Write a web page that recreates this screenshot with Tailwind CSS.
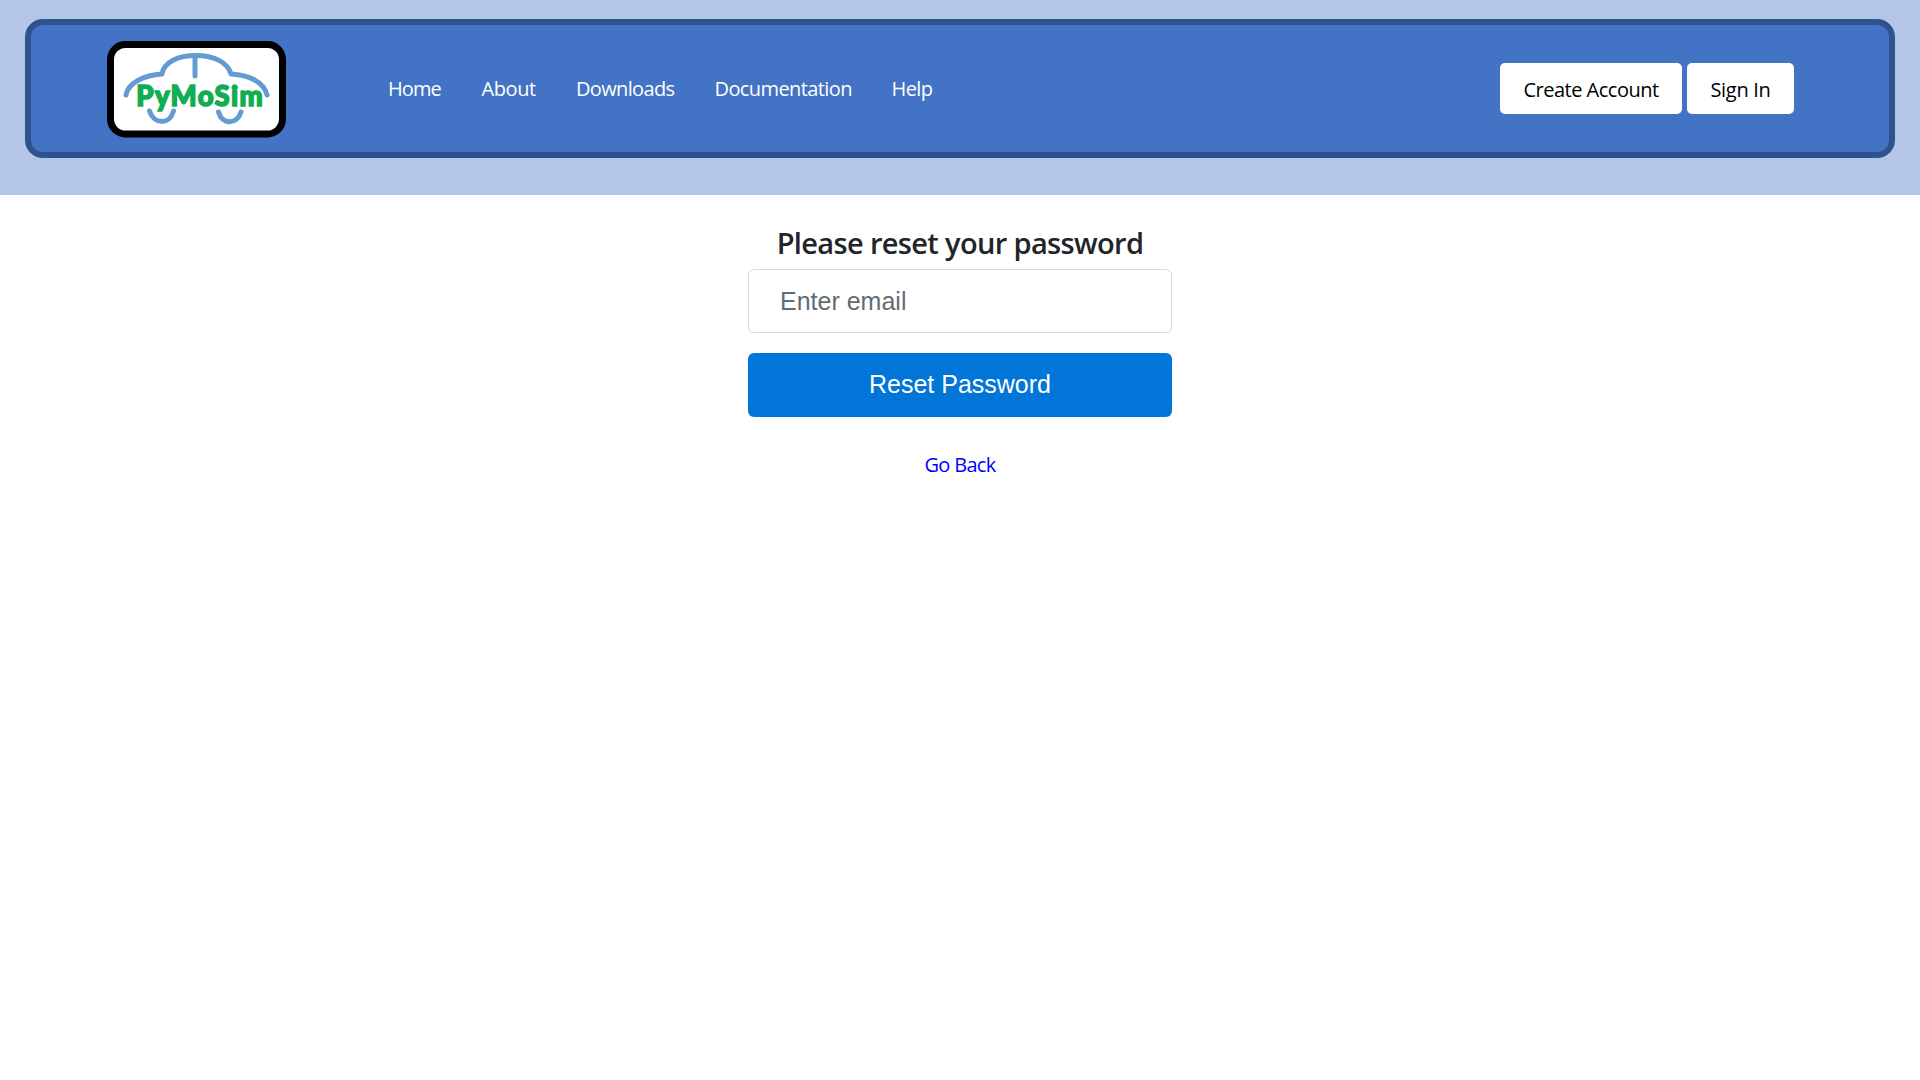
<!DOCTYPE html>
<html lang="en">
<head>
<meta charset="utf-8">
<title>PyMoSim</title>
<script src="https://cdn.jsdelivr.net/npm/@tailwindcss/browser@4"></script>
</head>
<body class="min-h-screen bg-white font-['Open_Sans',sans-serif] text-[20px] leading-[30px]">
<header class="h-[195px] bg-[#b4c6e7] px-[25px] pt-[19px]">
  <div class="flex h-[139px] items-center rounded-[18px] border-6 border-[#2f528f] bg-[#4273c5] pl-[74px] pr-[95px]">
    <svg class="h-[100px] w-[184px] shrink-0" viewBox="105 39 184 100" role="img" aria-label="PyMoSim">
      <rect x="110.500" y="44.500" width="172" height="89.500" rx="15" fill="#fff" stroke="#000" stroke-width="7"/>
      <g fill="none" stroke="#659bd3" stroke-width="5" stroke-linecap="round" stroke-linejoin="round">
        <path d="M126 95C128 83 144 75 162 74C164 62 178 55.500 196 55.500C215 55.500 228 63 231 74C249 75 264 82 267 95"/>
        <path d="M195 57V76"/>
        <path d="M149.500 111C154 125 170 125 173.500 111"/>
        <path d="M218.500 112C222 125 237 125 241 112"/>
      </g>
      <text transform="scale(.95 1)" x="143.500" y="106.500" textLength="133" lengthAdjust="spacing" class="font-['Lato'] text-[29px] font-black" fill="#10ae52" stroke="#10ae52" stroke-width="1.600">PyMoSim</text>
    </svg>
    <nav class="ml-[99px] flex gap-[40px] whitespace-nowrap text-white">
      <a class="w-[53px] tracking-[-0.9px]">Home</a>
      <a class="w-[55px] pl-[0.5px] tracking-[-0.4px]">About</a>
      <a class="w-[99px] tracking-[-0.65px]">Downloads</a>
      <a class="w-[137px] -indent-[0.5px] tracking-[-0.6px]">Documentation</a>
      <a class="w-[41px] -indent-[0.5px] tracking-[-0.6px]">Help</a>
    </nav>
    <div class="ml-auto flex gap-[5px] whitespace-nowrap text-black">
      <a class="flex h-[51px] w-[182px] items-center justify-center rounded-[5px] bg-white pt-[3px] tracking-[-0.5px]">Create Account</a>
      <a class="flex h-[51px] w-[107px] items-center justify-center rounded-[5px] bg-white pt-[3px] tracking-[-0.3px]">Sign In</a>
    </div>
  </div>
</header>
<main class="mx-auto flex w-[424px] flex-col items-center pt-[26px]">
  <h1 class="h-[48px] whitespace-nowrap text-[29px] font-semibold leading-[44px] tracking-[-0.65px] text-[#212529]">Please reset your password</h1>
  <input type="email" placeholder="Enter email" class="h-[64px] w-full rounded-[6px] border border-[#d9d9d9] px-[31px] font-['Liberation_Sans',sans-serif] text-[25px] placeholder:text-[#636c72]">
  <button class="mt-[20px] h-[64px] w-full rounded-[6px] bg-[#0275d8] pb-[2px] font-['Liberation_Sans',sans-serif] text-[25px] text-white">Reset Password</button>
  <a class="mt-[33px] tracking-[-0.7px] text-[#0000ff]">Go Back</a>
</main>
</body>
</html>
